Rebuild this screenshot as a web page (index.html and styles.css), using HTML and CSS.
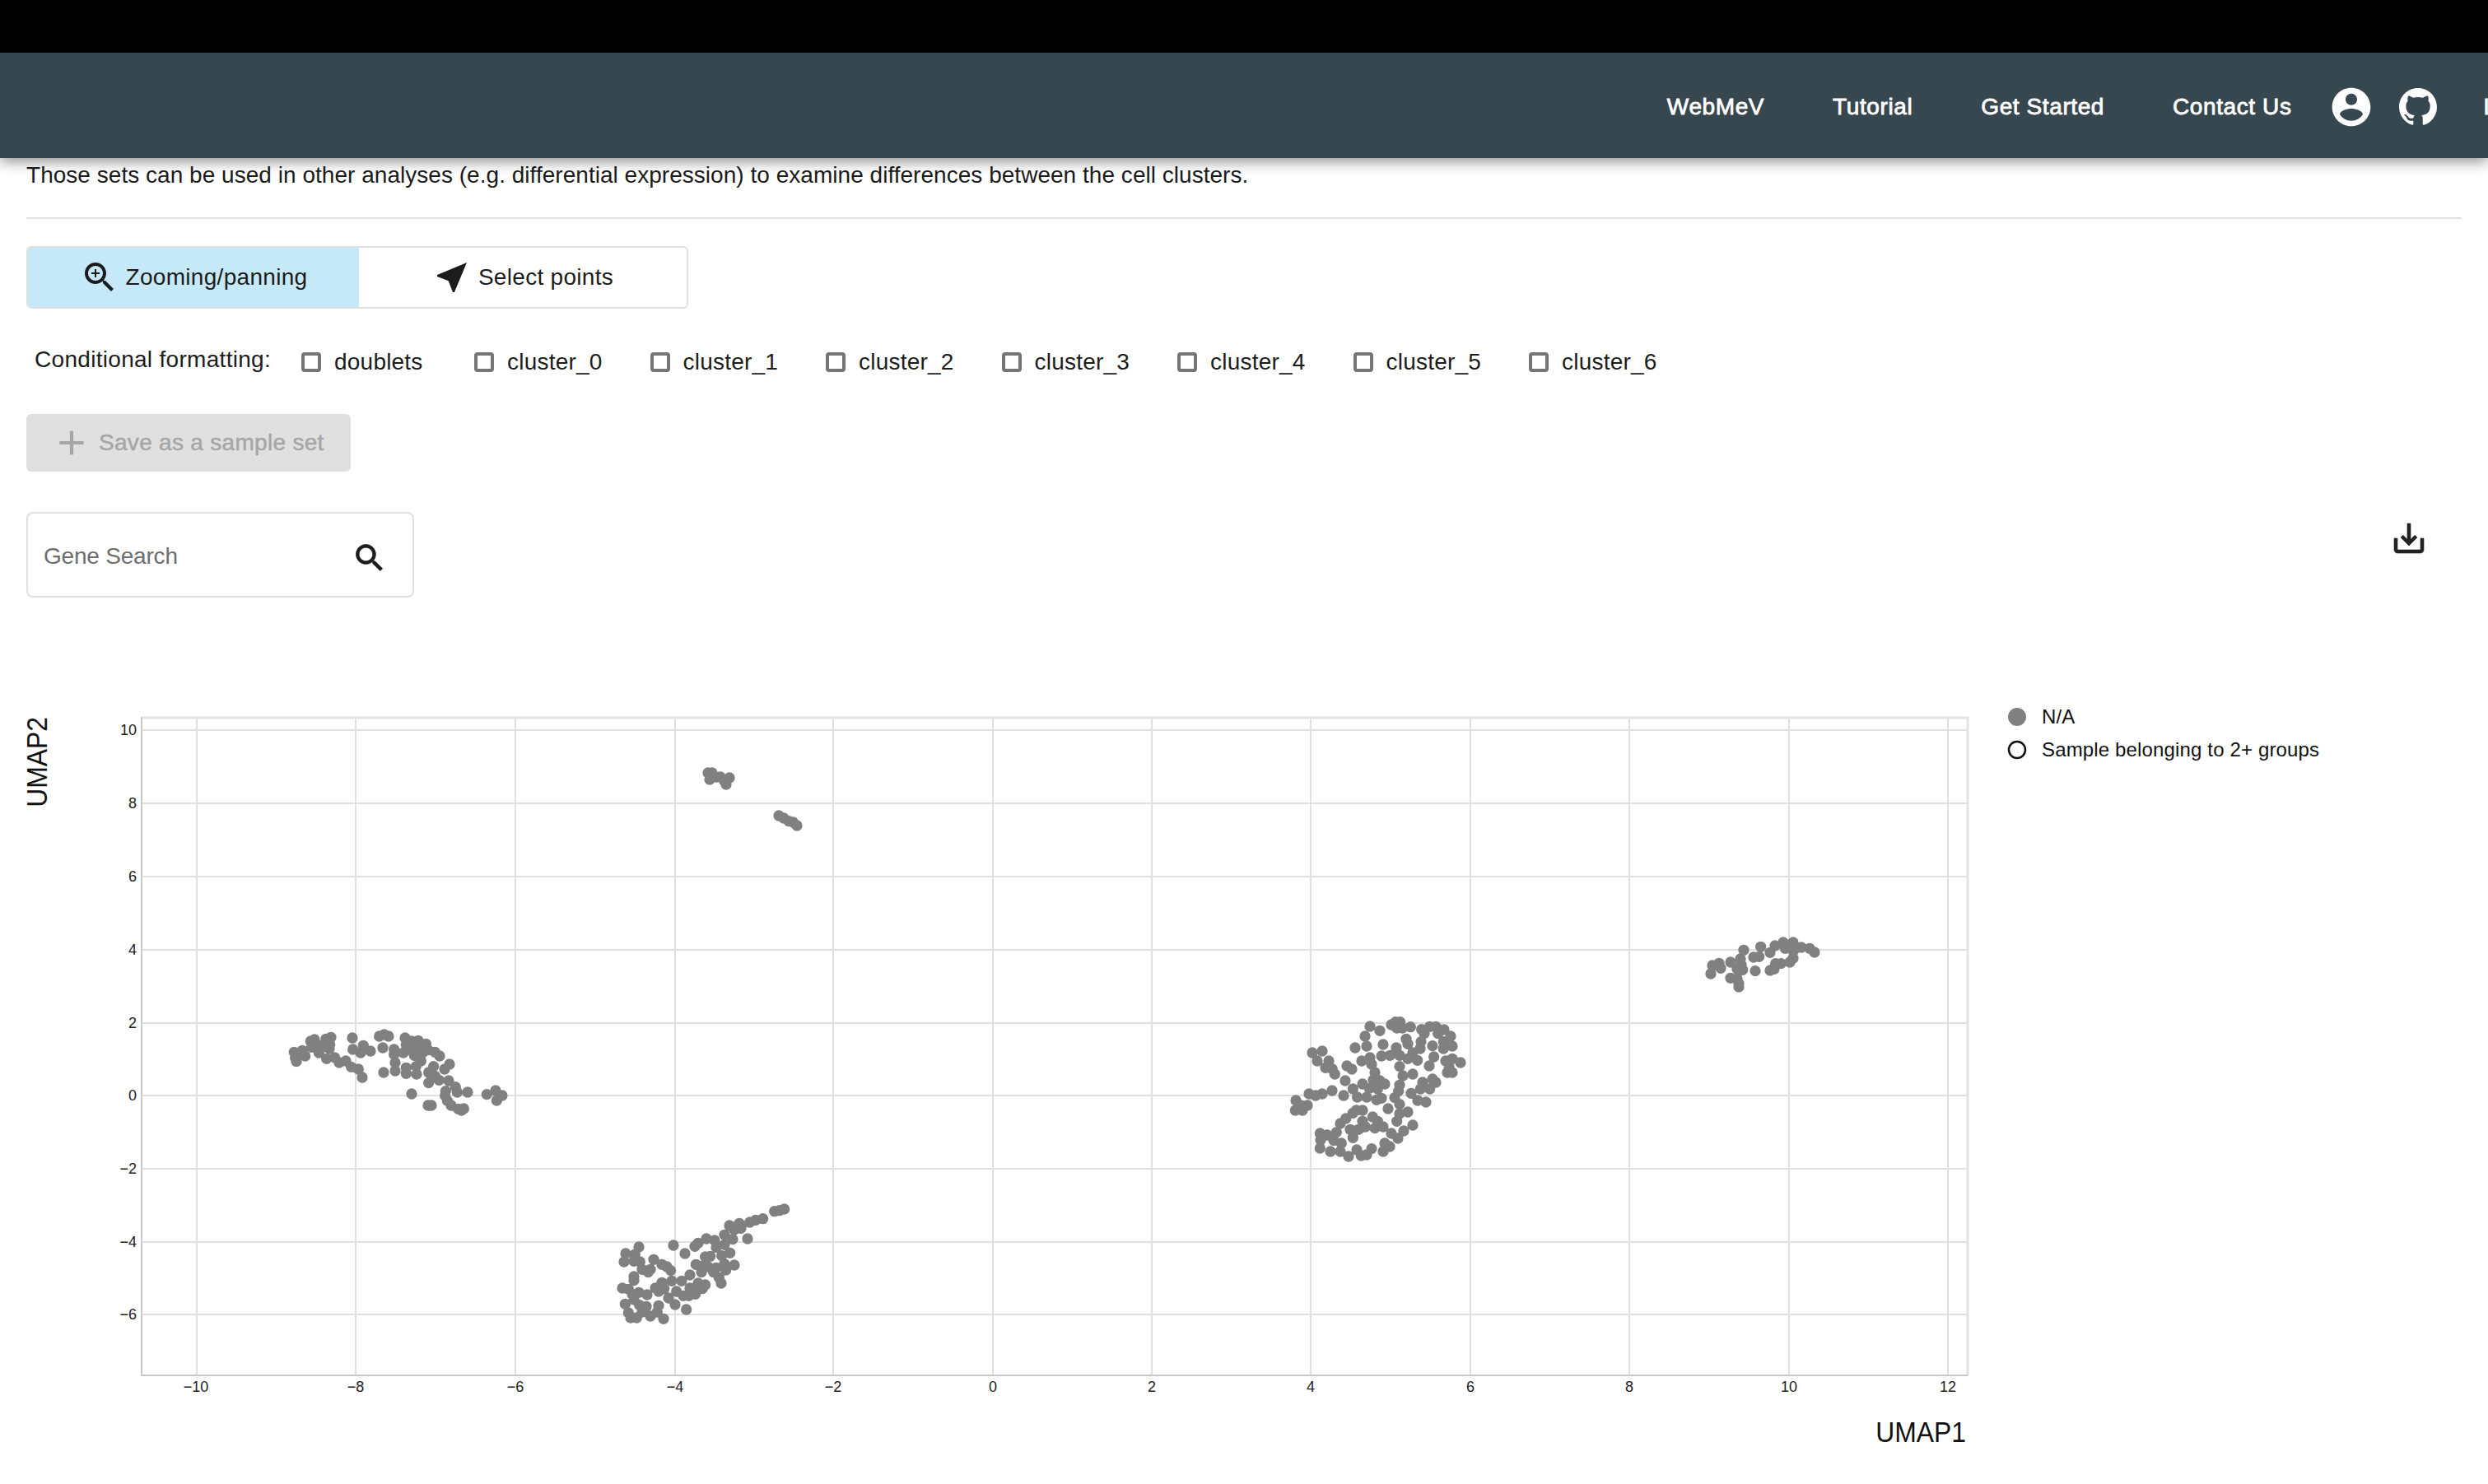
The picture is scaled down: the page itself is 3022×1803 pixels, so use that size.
FILE: index.html
```html
<!doctype html>
<html lang="en">

<head>
    <meta charset="utf-8">
    <meta name="viewport" content="width=device-width, initial-scale=1">
    <title>WebMeV</title>
    <link rel="stylesheet" href="styles.css">
</head>

<body>
<div class="top-strip"></div>

<header class="app-bar">
    <nav class="nav">
        <a class="nav-link" href="#">WebMeV</a>
        <a class="nav-link" href="#">Tutorial</a>
        <a class="nav-link" href="#">Get Started</a>
        <a class="nav-link" href="#">Contact Us</a>
        <svg class="nav-user" viewBox="0 0 24 24"><path d="M12 2C6.48 2 2 6.48 2 12s4.48 10 10 10 10-4.48 10-10S17.52 2 12 2zm0 3c1.66 0 3 1.34 3 3s-1.34 3-3 3-3-1.34-3-3 1.34-3 3-3zm0 14.2c-2.5 0-4.71-1.28-6-3.22.03-1.99 4-3.08 6-3.08 1.99 0 5.97 1.09 6 3.08-1.29 1.94-3.5 3.22-6 3.22z"/></svg>
        <svg class="nav-github" viewBox="0 0 16 16"><path d="M8 0C3.58 0 0 3.58 0 8c0 3.54 2.29 6.53 5.47 7.59.4.07.55-.17.55-.38 0-.19-.01-.82-.01-1.49-2.01.37-2.53-.49-2.69-.94-.09-.23-.48-.94-.82-1.13-.28-.15-.68-.52-.01-.53.63-.01 1.08.58 1.23.82.72 1.21 1.87.87 2.33.66.07-.52.28-.87.51-1.07-1.78-.2-3.64-.89-3.64-3.95 0-.87.31-1.59.82-2.15-.08-.2-.36-1.02.08-2.12 0 0 .67-.21 2.2.82.64-.18 1.32-.27 2-.27.68 0 1.36.09 2 .27 1.53-1.04 2.2-.82 2.2-.82.44 1.1.16 1.92.08 2.12.51.56.82 1.27.82 2.15 0 3.07-1.87 3.75-3.65 3.95.29.25.54.73.54 1.48 0 1.07-.01 1.93-.01 2.2 0 .21.15.46.55.38A8.013 8.013 0 0016 8c0-4.42-3.58-8-8-8z"/></svg>
        <a class="nav-link nav-last" href="#">Log In</a>
    </nav>
</header>

<main class="content">
    <p class="intro">Those sets can be used in other analyses (e.g. differential expression) to examine differences between the cell clusters.</p>
    <hr class="rule">

    <div class="mode-toggle">
        <button type="button" class="mode-btn mode-zoom active">
            <svg class="icon" viewBox="0 0 24 24"><path d="M15.5 14h-.79l-.28-.27C15.41 12.59 16 11.11 16 9.5 16 5.91 13.09 3 9.5 3S3 5.91 3 9.5 5.91 16 9.5 16c1.61 0 3.09-.59 4.23-1.57l.27.28v.79l5 4.99L20.49 19l-4.99-5zm-6 0C7.01 14 5 11.99 5 9.5S7.01 5 9.5 5 14 7.01 14 9.5 11.99 14 9.5 14zM12 10h-2v2H9v-2H7V9h2V7h1v2h2v1z"/></svg>
            Zooming/panning
        </button>
        <button type="button" class="mode-btn mode-select">
            <svg class="icon" viewBox="0 0 24 24"><path d="M21 3L3 10.53v.98l6.84 2.65L12.48 21h.98L21 3z"/></svg>
            Select points
        </button>
    </div>

    <div class="filters">
        <span class="filters-title">Conditional formatting:</span>
        <label class="check"><input type="checkbox">doublets</label>
        <label class="check"><input type="checkbox">cluster_0</label>
        <label class="check"><input type="checkbox">cluster_1</label>
        <label class="check"><input type="checkbox">cluster_2</label>
        <label class="check"><input type="checkbox">cluster_3</label>
        <label class="check"><input type="checkbox">cluster_4</label>
        <label class="check"><input type="checkbox">cluster_5</label>
        <label class="check"><input type="checkbox">cluster_6</label>
    </div>

    <button type="button" class="save-btn" disabled>
        <svg class="save-icon" viewBox="0 0 24 24"><path d="M19 13h-6v6h-2v-6H5v-2h6V5h2v6h6v2z"/></svg>
        Save as a sample set
    </button>

    <div class="tools">
        <div class="search">
            <input class="search-input" type="text" placeholder="Gene Search">
            <svg class="search-icon" viewBox="0 0 24 24"><path d="M15.5 14h-.79l-.28-.27C15.41 12.59 16 11.11 16 9.5 16 5.91 13.09 3 9.5 3S3 5.91 3 9.5 5.91 16 9.5 16c1.61 0 3.09-.59 4.23-1.57l.27.28v.79l5 4.99L20.49 19l-4.99-5zm-6 0C7.01 14 5 11.99 5 9.5S7.01 5 9.5 5 14 7.01 14 9.5 11.99 14 9.5 14z"/></svg>
        </div>
        <svg class="download-icon" viewBox="0 0 24 24"><path d="M19 12v7H5v-7H3v7c0 1.1.9 2 2 2h14c1.1 0 2-.9 2-2v-7h-2zm-6 .67l2.59-2.58L17 11.5l-5 5-5-5 1.41-1.41L11 12.67V3h2z"/></svg>
    </div>

    <!-- viewBox keeps page coordinates, so the numbers read straight off the screenshot -->
    <svg class="plot" viewBox="32 840 2958 940">
        <g class="grid">
            <path d="M239 872V1672M432 872V1672M626 872V1672M820 872V1672M1012 872V1672M1206 872V1672M1399 872V1672M1592 872V1672M1786 872V1672M1979 872V1672M2173 872V1672M2366 872V1672"/>
            <path d="M172 888H2390M172 977H2390M172 1066H2390M172 1155H2390M172 1244H2390M172 1332H2390M172 1421H2390M172 1510H2390M172 1598H2390"/>
        </g>
        <path class="frame" d="M172 873H2390V1672"/>
        <path class="axis" d="M172 872V1672H2390"/>

        <!-- cell clusters -->
        <g class="points" transform="translate(280 1180) scale(.3333)">
            <path d="M232 298h0M236 318h0M240 332h0M262 292h0M272 312h0M292 258h0M306 252h0M296 280h0M316 270h0M322 300h0M348 250h0M366 244h0M362 270h0M360 285h0M335 280h0M350 322h0M380 318h0M396 336h0M420 330h0M440 352h0M466 360h0M480 390h0M444 246h0M446 288h0M474 300h0M484 274h0M510 294h0M542 240h0M560 234h0M576 240h0M555 282h0M558 372h0M596 288h0M596 306h0M600 336h0M600 366h0M640 376h0M678 378h0M636 246h0M640 270h0M660 258h0M684 256h0M650 288h0M630 300h0M680 290h0M712 268h0M720 290h0M745 298h0M762 312h0M694 330h0M676 350h0M640 355h0M740 350h0M798 342h0M780 360h0M722 372h0M745 385h0M760 400h0M722 410h0M795 402h0M820 425h0M826 444h0M864 444h0M784 440h0M782 456h0M790 475h0M804 492h0M830 505h0M850 504h0M842 510h0M660 450h0M720 492h0M732 492h0M934 452h0M966 438h0M990 456h0M970 474h0M700 300h0M670 310h0"/>
        </g>
        <g class="points" transform="translate(700 1430) scale(.3333)">
            <path d="M228 258h0M180 282h0M214 285h0M174 312h0M210 310h0M232 312h0M240 340h0M262 350h0M270 340h0M282 304h0M312 322h0M330 330h0M344 344h0M354 252h0M396 282h0M432 256h0M444 244h0M474 228h0M504 234h0M510 260h0M540 214h0M558 180h0M594 172h0M576 195h0M570 230h0M600 190h0M624 228h0M632 168h0M654 160h0M680 155h0M722 128h0M740 125h0M758 120h0M540 250h0M560 280h0M530 290h0M540 320h0M576 324h0M545 342h0M470 294h0M488 292h0M436 322h0M456 328h0M480 330h0M510 334h0M414 360h0M456 350h0M500 350h0M520 370h0M528 390h0M384 382h0M348 382h0M312 388h0M288 408h0M300 420h0M320 410h0M210 366h0M210 380h0M168 408h0M190 412h0M204 430h0M228 424h0M258 432h0M178 466h0M210 450h0M230 470h0M255 475h0M300 472h0M190 498h0M198 516h0M220 516h0M240 495h0M270 510h0M295 495h0M318 520h0M401 486h0M360 468h0M336 444h0M365 420h0M390 436h0M410 436h0M434 430h0M414 408h0M444 390h0M470 396h0M460 410h0M438 410h0"/>
        </g>
        <g class="points" transform="translate(1540 1200) scale(.3333)">
            <path d="M372 144h0M408 160h0M354 180h0M318 222h0M360 216h0M420 210h0M468 222h0M504 190h0M510 208h0M450 138h0M465 128h0M482 128h0M470 150h0M490 150h0M520 146h0M560 155h0M590 145h0M612 145h0M642 156h0M666 180h0M672 216h0M640 200h0M620 170h0M570 170h0M558 200h0M555 225h0M600 215h0M640 225h0M605 255h0M545 268h0M510 262h0M528 240h0M480 290h0M480 250h0M445 250h0M414 252h0M198 234h0M162 240h0M180 270h0M222 270h0M210 295h0M235 300h0M244 318h0M288 288h0M306 300h0M342 270h0M372 258h0M378 282h0M390 312h0M384 340h0M408 342h0M426 354h0M400 372h0M282 342h0M345 354h0M370 370h0M310 372h0M326 402h0M360 402h0M276 396h0M234 378h0M198 390h0M174 396h0M150 390h0M102 414h0M144 432h0M120 432h0M100 450h0M126 450h0M396 412h0M414 406h0M438 444h0M480 358h0M476 380h0M462 404h0M480 428h0M522 388h0M546 414h0M576 420h0M556 372h0M564 348h0M590 372h0M600 336h0M612 348h0M492 324h0M528 318h0M588 288h0M648 270h0M672 262h0M702 276h0M654 312h0M672 312h0M660 290h0M510 456h0M480 462h0M470 490h0M528 504h0M495 525h0M474 552h0M450 534h0M444 582h0M426 570h0M420 600h0M378 590h0M360 612h0M340 615h0M324 594h0M294 618h0M264 600h0M228 600h0M190 588h0M192 558h0M190 534h0M216 540h0M250 530h0M268 570h0M240 560h0M310 550h0M300 520h0M330 520h0M355 510h0M390 515h0M420 510h0M264 498h0M284 480h0M310 460h0M322 450h0M345 450h0M345 490h0M382 474h0M400 490h0"/>
        </g>
        <g class="points" transform="translate(2040 1090) scale(.3333)">
            <path d="M234 196h0M296 184h0M120 252h0M144 244h0M150 262h0M114 282h0M186 240h0M222 228h0M225 250h0M210 265h0M230 268h0M186 298h0M210 300h0M216 318h0M216 330h0M270 222h0M290 220h0M276 272h0M330 270h0M345 265h0M350 245h0M370 245h0M330 205h0M348 180h0M378 168h0M414 168h0M385 190h0M415 200h0M444 186h0M474 190h0M492 204h0M402 240h0M414 226h0"/>
        </g>
        <g class="points" transform="translate(820 920) scale(.3333)">
            <path d="M120 60h0M135 60h0M126 84h0M150 75h0M165 75h0M198 78h0M186 102h0M180 90h0M378 216h0M396 225h0M414 236h0M430 240h0M444 252h0"/>
        </g>

        <g class="tick tick-x">
            <text x="238" y="1692">−10</text>
            <text x="432" y="1692">−8</text>
            <text x="626" y="1692">−6</text>
            <text x="820" y="1692">−4</text>
            <text x="1012" y="1692">−2</text>
            <text x="1206" y="1692">0</text>
            <text x="1399" y="1692">2</text>
            <text x="1592" y="1692">4</text>
            <text x="1786" y="1692">6</text>
            <text x="1979" y="1692">8</text>
            <text x="2173" y="1692">10</text>
            <text x="2366" y="1692">12</text>
        </g>
        <g class="tick tick-y">
            <text x="166" y="894">10</text>
            <text x="166" y="983">8</text>
            <text x="166" y="1072">6</text>
            <text x="166" y="1161">4</text>
            <text x="166" y="1250">2</text>
            <text x="166" y="1338">0</text>
            <text x="166" y="1427">−2</text>
            <text x="166" y="1516">−4</text>
            <text x="166" y="1604">−6</text>
        </g>

        <text class="axis-title" transform="translate(2388 1753) scale(.91 1)">UMAP1</text>
        <text class="axis-title" transform="translate(57 872) rotate(-90) scale(.91 1)">UMAP2</text>

        <circle class="legend-dot" cx="2450" cy="872" r="11"/>
        <text class="legend-text" x="2480" y="880">N/A</text>
        <circle class="legend-ring" cx="2450" cy="912" r="10"/>
        <text class="legend-text" x="2480" y="920">Sample belonging to 2+ groups</text>
    </svg>
</main>
</body>
</html>
```

FILE: styles.css
```css
:root {
    --color-bar: #37474f;
    --color-text: #1c1c1c;
    --color-border: #e0e0e0;
    --color-active: #c5e9f8;
    --color-muted: #a6a6a6;
    --font-stack: "Liberation Sans", Arial, sans-serif;
}

*, *::before, *::after {
    box-sizing: border-box;
}

html, body {
    height: 1803px;
    overflow: hidden;
}

body {
    margin: 0;
    background: #fff;
    color: var(--color-text);
    font-family: var(--font-stack);
    font-size: 28px;
}

.top-strip {
    height: 64px;
    background: #000;
}

.app-bar {
    position: relative;
    z-index: 1;
    display: flex;
    justify-content: flex-end;
    align-items: center;
    height: 128px;
    background: var(--color-bar);
    box-shadow: 0 4px 16px rgb(0 0 0 / 0.45);
}

.nav {
    display: flex;
    align-items: center;
    margin-right: -76px;
}

.nav-link {
    margin-right: 83px;
    padding-top: 3px;
    color: #fff;
    letter-spacing: 0.6px;
    -webkit-text-stroke: 0.8px #fff;
    text-decoration: none;
    white-space: nowrap;
}

.nav-link:nth-of-type(4) {
    margin-right: 44px;
}

.nav-last {
    margin-right: 0;
    margin-left: 57px;
}

.nav-user {
    width: 56px;
    height: 56px;
    margin-top: 3px;
    fill: #fff;
}

.nav-github {
    width: 46px;
    height: 46px;
    margin-top: 3px;
    margin-left: 30px;
    fill: #fff;
}

.content {
    padding: 0 32px;
}

.intro {
    margin: 0;
    padding-top: 1px;
    line-height: 40px;
    letter-spacing: 0.03px;
}

.rule {
    height: 2px;
    margin: 31px 0 33px;
    border: none;
    background: var(--color-border);
}

.mode-toggle {
    display: flex;
    width: 804px;
    height: 76px;
    overflow: hidden;
    border: 2px solid var(--color-border);
    border-radius: 6px;
}

.mode-btn {
    display: flex;
    justify-content: center;
    align-items: center;
    gap: 8px;
    border: none;
    background: #fff;
    color: var(--color-text);
    font: inherit;
    letter-spacing: 0.3px;
}

.mode-zoom {
    width: 402px;
}

.mode-select {
    flex: 1;
}

.mode-btn.active {
    background: var(--color-active);
}

.icon {
    width: 48px;
    height: 48px;
    fill: var(--color-text);
}

.filters {
    display: flex;
    align-items: center;
    height: 48px;
    margin-top: 41px;
    padding-left: 10px;
}

.filters-title {
    margin-right: 37px;
    letter-spacing: 0.3px;
    transform: translateY(-3px);
}

.check {
    display: flex;
    align-items: center;
    gap: 16px;
    width: 213.5px;
    letter-spacing: 0.2px;
}

.check:first-of-type {
    width: 210px;
}

.check input {
    appearance: none;
    width: 24px;
    height: 24px;
    margin: 0;
    border: 4px solid #757575;
    border-radius: 4px;
}

.save-btn {
    display: flex;
    align-items: center;
    gap: 8px;
    height: 70px;
    margin-top: 39px;
    padding: 0 32px 0 30px;
    border: none;
    border-radius: 6px;
    background: var(--color-border);
    color: var(--color-muted);
    font: inherit;
    letter-spacing: 0.3px;
    -webkit-text-stroke: 0.5px var(--color-muted);
}

.save-icon {
    width: 50px;
    height: 50px;
    fill: var(--color-muted);
}

.tools {
    display: flex;
    justify-content: space-between;
    align-items: flex-start;
    margin-top: 49px;
    padding-right: 40px;
}

.search {
    display: flex;
    align-items: center;
    width: 471px;
    height: 104px;
    padding: 0 30px 0 19px;
    border: 2px solid var(--color-border);
    border-radius: 8px;
}

.search-input {
    flex: 1;
    min-width: 0;
    padding: 4px 0 0;
    border: none;
    outline: none;
    background: transparent;
    color: var(--color-text);
    font: inherit;
    letter-spacing: -0.2px;
}

.search-input::placeholder {
    color: #6d6d6d;
    opacity: 1;
}

.search-icon {
    width: 44px;
    height: 44px;
    margin-top: 8px;
    fill: var(--color-text);
    stroke: var(--color-text);
    stroke-width: 0.4;
}

.download-icon {
    width: 48px;
    height: 48px;
    margin-top: 8px;
    fill: #222;
    stroke: #222;
    stroke-width: 0.3;
}

/* plot */
.plot {
    display: block;
    width: 2958px;
    height: 940px;
    margin-top: 113px;
}

.grid path {
    fill: none;
    stroke: #e0e0e0;
    stroke-width: 2;
}

.frame {
    fill: none;
    stroke: #e3e3e3;
    stroke-width: 3;
}

.axis {
    fill: none;
    stroke: #c8c8c8;
    stroke-width: 2;
}

.points path {
    fill: none;
    stroke: #808080;
    stroke-width: 40;
    stroke-linecap: round;
}

.tick {
    fill: #222;
    font-size: 18px;
}

.tick-x {
    text-anchor: middle;
}

.tick-y {
    text-anchor: end;
}

.axis-title {
    fill: #111;
    font-size: 35px;
    text-anchor: end;
}

.legend-dot {
    fill: #808080;
}

.legend-ring {
    fill: #fff;
    stroke: #111;
    stroke-width: 2.5;
}

.legend-text {
    fill: #111;
    font-size: 24px;
    letter-spacing: 0.15px;
}
```
